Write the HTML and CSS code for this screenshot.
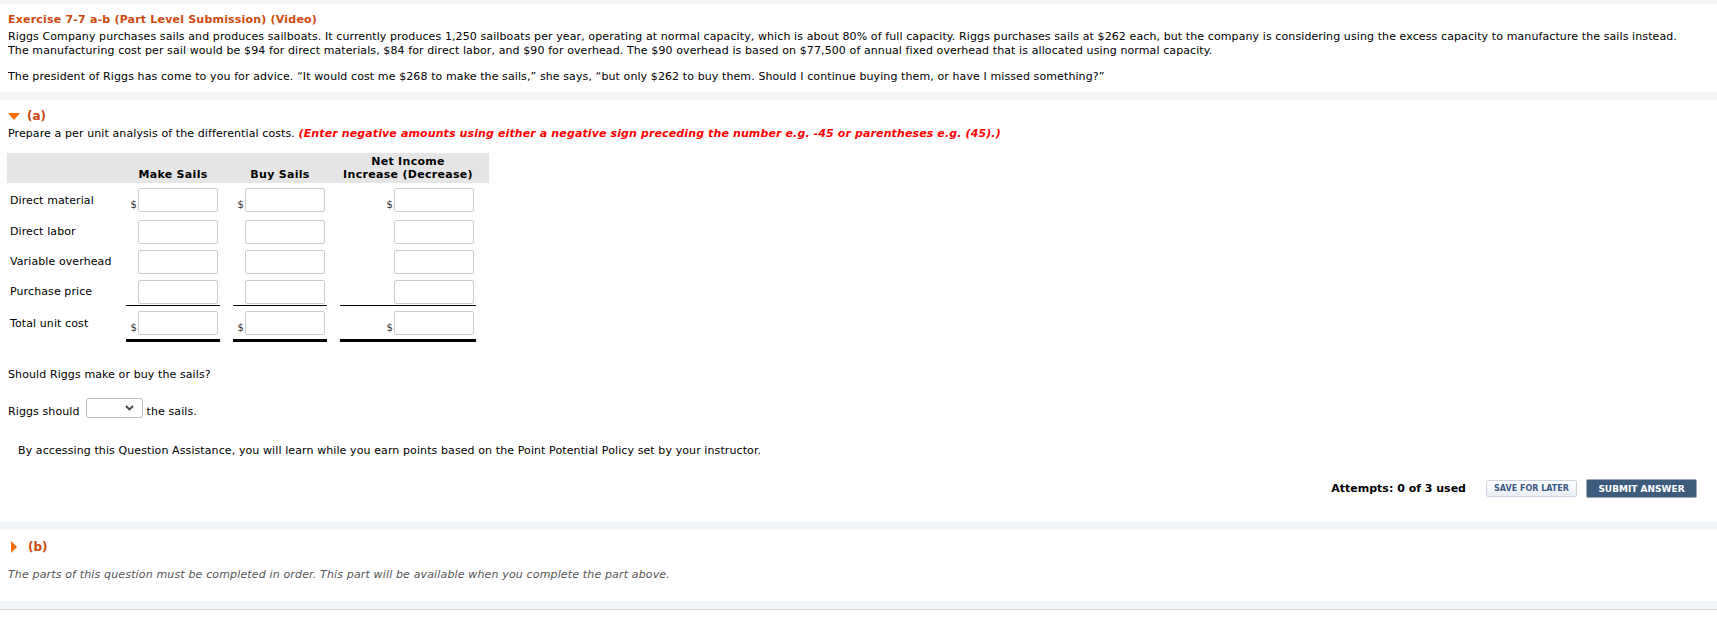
FILE: index.html
```html
<!DOCTYPE html>
<html lang="en">
<head>
<meta charset="utf-8">
<title>Exercise 7-7 a-b</title>
<link rel="stylesheet" href="styles.css">
</head>
<body>
<div class="page">
  <section class="card intro">
    <h1 class="title">Exercise 7-7 a-b (Part Level Submission) (Video)</h1>
    <p>Riggs Company purchases sails and produces sailboats. It currently produces 1,250 sailboats per year, operating at normal capacity, which is about 80% of full capacity. Riggs purchases sails at $262 each, but the company is considering using the excess capacity to manufacture the sails instead.<br>The manufacturing cost per sail would be $94 for direct materials, $84 for direct labor, and $90 for overhead. The $90 overhead is based on $77,500 of annual fixed overhead that is allocated using normal capacity.</p>
    <p class="p2">The president of Riggs has come to you for advice. “It would cost me $268 to make the sails,” she says, “but only $262 to buy them. Should I continue buying them, or have I missed something?”</p>
  </section>

  <section class="card part-a">
    <div class="part-head">
      <svg class="tri-down" width="12" height="7" viewBox="0 0 12 7"><polygon points="0,0 12,0 6,7" fill="#ff6a00"/></svg>
      <span class="part-label">(a)</span>
    </div>
    <p class="prompt">Prepare a per unit analysis of the differential costs. <em class="warn">(Enter negative amounts using either a negative sign preceding the number e.g. -45 or parentheses e.g. (45).)</em></p>

    <div class="sheet">
      <div class="grid sheet-head">
        <div></div>
        <div>Make Sails</div>
        <div>Buy Sails</div>
        <div>Net Income<br>Increase (Decrease)</div>
      </div>

      <div class="grid row first">
        <div class="label">Direct material</div>
        <div class="cell"><span class="dollar">$</span><input class="amt" type="text"></div>
        <div class="cell"><span class="dollar">$</span><input class="amt" type="text"></div>
        <div class="cell"><span class="dollar">$</span><input class="amt" type="text"></div>
      </div>
      <div class="grid row">
        <div class="label">Direct labor</div>
        <div class="cell"><input class="amt" type="text"></div>
        <div class="cell"><input class="amt" type="text"></div>
        <div class="cell"><input class="amt" type="text"></div>
      </div>
      <div class="grid row">
        <div class="label">Variable overhead</div>
        <div class="cell"><input class="amt" type="text"></div>
        <div class="cell"><input class="amt" type="text"></div>
        <div class="cell"><input class="amt" type="text"></div>
      </div>
      <div class="grid row">
        <div class="label">Purchase price</div>
        <div class="cell sub"><input class="amt" type="text"></div>
        <div class="cell sub"><input class="amt" type="text"></div>
        <div class="cell sub"><input class="amt" type="text"></div>
      </div>
      <div class="grid row">
        <div class="label">Total unit cost</div>
        <div class="cell total"><span class="dollar">$</span><input class="amt" type="text"></div>
        <div class="cell total"><span class="dollar">$</span><input class="amt" type="text"></div>
        <div class="cell total"><span class="dollar">$</span><input class="amt" type="text"></div>
      </div>
    </div>

    <p class="q1">Should Riggs make or buy the sails?</p>
    <div class="q2">
      <span>Riggs should</span>
      <span class="select-wrap">
        <select class="choice"><option></option><option>make</option><option>buy</option></select>
        <svg class="chev" width="9" height="6" viewBox="0 0 9 6"><polyline points="1,1 4.5,4.5 8,1" fill="none" stroke="#444" stroke-width="1.8"/></svg>
      </span>
      <span>the sails.</span>
    </div>

    <p class="assist">By accessing this Question Assistance, you will learn while you earn points based on the Point Potential Policy set by your instructor.</p>

    <div class="actions">
      <span class="attempts">Attempts: 0 of 3 used</span>
      <button class="btn-save" type="button">SAVE FOR LATER</button>
      <button class="btn-submit" type="button">SUBMIT ANSWER</button>
    </div>
  </section>

  <section class="card part-b">
    <div class="part-head">
      <svg class="tri-right" width="6" height="12" viewBox="0 0 6 12"><polygon points="0,0 6,6 0,12" fill="#ff6a00"/></svg>
      <span class="part-label">(b)</span>
    </div>
    <p class="locked">The parts of this question must be completed in order. This part will be available when you complete the part above.</p>
  </section>
</div>
</body>
</html>
```

FILE: styles.css
```css
body {
  margin: 0;
  font-family: "DejaVu Sans", Verdana, sans-serif;
  font-size: 11px;
  letter-spacing: 0.1px;
  color: #000;
  background: #fff;
}

p {
  margin: 0;
  line-height: 14px;
}

.page {
  background: #f3f6f9;
  padding: 4px 0 8px;
  border-bottom: 1px solid #d3d9e0;
}

.card {
  background: #fff;
  padding: 0 8px;
}

.card + .card {
  margin-top: 8px;
}

.intro {
  padding-top: 9px;
  padding-bottom: 8px;
}

.title {
  margin: 0 0 3px;
  font-size: 11px;
  line-height: 14px;
  font-weight: bold;
  letter-spacing: 0.2px;
  color: #cc4a12;
}

.intro .p2 {
  margin-top: 12px;
}

.part-a {
  padding-top: 8px;
  padding-bottom: 24px;
}

.part-head {
  display: flex;
  align-items: center;
  height: 16px;
}

.tri-down {
  margin-right: 7px;
}

.tri-right {
  margin-left: 3px;
  margin-right: 11px;
}

.part-label {
  font-size: 12px;
  font-weight: bold;
  letter-spacing: 0;
  color: #cc4a12;
}

.prompt {
  margin-top: 3px;
}

.warn {
  color: #ff0000;
  font-weight: bold;
  letter-spacing: 0.12px;
}

.sheet {
  margin-top: 12px;
  margin-left: -1px;
  width: 482px;
}

.grid {
  display: grid;
  grid-template-columns: 106px 94px 94px 136px;
  column-gap: 13px;
  padding-right: 13px;
}

.sheet-head {
  background: #e5e5e5;
  height: 30px;
  box-sizing: border-box;
  padding-bottom: 2px;
  align-items: end;
  text-align: center;
  font-weight: bold;
  letter-spacing: 0.3px;
  line-height: 13px;
  color: #000;
}

.row {
  align-items: center;
}

.row.first {
  margin-top: 2px;
}

.row.first .cell {
  padding-bottom: 5px;
}

.label {
  padding-left: 3px;
  line-height: 14px;
}

.cell {
  display: flex;
  justify-content: flex-end;
  align-items: flex-end;
  gap: 1px;
  padding: 3px 2px 3px 0;
}

.cell.sub {
  padding-bottom: 1px;
  border-bottom: 1px solid #000;
}

.cell.total {
  padding-top: 5px;
  padding-bottom: 4px;
  border-bottom: 3px solid #000;
}

.dollar {
  font-size: 10px;
  line-height: 10px;
  margin-bottom: 2px;
  color: #333;
}

.amt {
  box-sizing: border-box;
  width: 80px;
  height: 24px;
  margin: 0;
  padding: 2px 4px;
  border: 1px solid #cccccc;
  border-radius: 2px;
  background: #fff;
  font: inherit;
}

.q1 {
  margin-top: 26px;
}

.q2 {
  margin-top: 16px;
  display: flex;
  align-items: flex-end;
  line-height: 14px;
}

.select-wrap {
  position: relative;
  display: inline-block;
  margin: 0 4px 1px 6px;
}

.choice {
  display: block;
  box-sizing: border-box;
  width: 57px;
  height: 20px;
  margin: 0;
  padding: 0 4px;
  border: 1px solid #bdbdbd;
  border-radius: 3px;
  background: #fff;
  font: inherit;
  -webkit-appearance: none;
  appearance: none;
}

.chev {
  position: absolute;
  right: 9px;
  top: 7px;
  pointer-events: none;
}

.assist {
  margin-top: 25px;
  padding-left: 10px;
}

.actions {
  margin-top: 21px;
  padding-right: 12px;
  display: flex;
  justify-content: flex-end;
  align-items: center;
}

.attempts {
  font-weight: bold;
  letter-spacing: 0;
  margin-right: 20px;
}

.btn-save {
  box-sizing: border-box;
  width: 91px;
  height: 17px;
  margin: 0 9px 0 0;
  padding: 0;
  border: 1px solid #cbd4de;
  border-radius: 2px;
  background: linear-gradient(#ffffff, #e9eef4);
  color: #3b5a84;
  font-family: "DejaVu Sans", Verdana, sans-serif;
  font-size: 8px;
  font-weight: bold;
  letter-spacing: 0;
}

.btn-submit {
  box-sizing: border-box;
  width: 111px;
  height: 19px;
  margin: 0;
  padding: 0;
  border: 1px solid #9aa8b8;
  border-radius: 2px;
  background: #3f5b7b;
  color: #fff;
  font-family: "DejaVu Sans", Verdana, sans-serif;
  font-size: 9px;
  font-weight: bold;
  letter-spacing: 0;
}

.part-b {
  padding-top: 9px;
  padding-bottom: 19px;
}

.locked {
  margin-top: 13px;
  font-style: italic;
  letter-spacing: 0.15px;
  color: #555;
}
```
